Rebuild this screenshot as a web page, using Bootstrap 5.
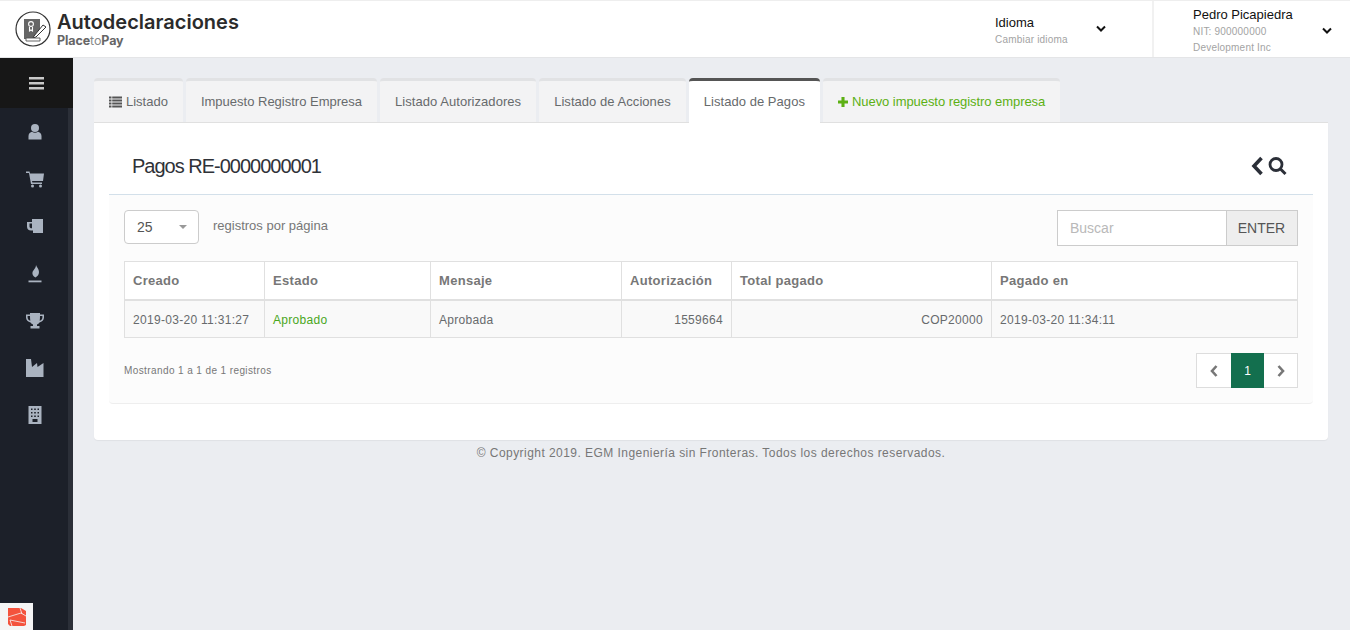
<!DOCTYPE html>
<html lang="es">
<head>
    <meta charset="utf-8">
    <title>Autodeclaraciones</title>
    <link href="https://cdn.jsdelivr.net/npm/bootstrap@5.3.0/dist/css/bootstrap.min.css" rel="stylesheet">
    <style>
        html, body { height: 100%; overflow: hidden; }
        body { background: #ebedf1; font-family: "Liberation Sans", Arial, sans-serif; font-size: 13px; color: #676a6c; }
        .top-bar { height: 58px; background: #fff; border-top: 1px solid #eee; border-bottom: 1px solid #e4e5e7; }
        .brand-wrap { padding-left: 15px; gap: 6px; }
        .brand-name { font-family: "Inter", sans-serif; font-weight: 600; font-size: 20px; line-height: 20px; color: #2b2b2b; padding-top: 1px; margin-bottom: 2px; box-sizing: content-box; }
        .brand-sub { font-family: "Inter", sans-serif; font-weight: 700; font-size: 12.500px; line-height: 14px; color: #666; letter-spacing: -.1px; }
        .brand-sub span { font-weight: 400; color: #888; }
        .top-lang { width: 157px; }
        .top-user { width: 198px; border-left: 2px solid #f1f1f1; padding-left: 39px; padding-top: 3px; }
        .top-main { font-size: 13px; line-height: 18px; color: #111; }
        .top-lang .top-main { margin-top: 4px; }
        .top-sub { font-size: 10px; line-height: 16px; color: #a3a3a3; letter-spacing: .2px; }
        .top-caret { width: 10px; height: 8px; }
        .lang-caret { margin-left: 28px; }
        .user-caret { margin-left: 29px; }
        .side-bar { width: 73px; background: #1c2029; border-right: 5px solid #2b2f38; position: relative; }
        .side-toggle { width: 73px; height: 50px; background: #171717; }
        .side-item { height: 47.300px; padding-left: 2px; }
        .side-item svg { width: 18px; height: 18px; fill: #aab3c0; }
        .debug-tab { position: absolute; left: 0; bottom: 0; width: 33px; height: 27px; background: #f5f5f5; }
        .main-area { padding: 20px 22px 0 21px; min-width: 0; }
        .pay-tabs { gap: 3px; height: 45px; }
        .pay-tab { height: 45px; padding: 0 15px; background: #f3f3f4; border-top: 3px solid #e1e2e4; border-radius: 4px 4px 0 0; border-bottom: 1px solid #e0e0e0; color: #676a6c; white-space: nowrap; text-decoration: none; }
        .pay-tab svg { width: 13px; height: 13px; margin-right: 4px; }
        .pay-tab.tab-spaced { letter-spacing: .05px; }
        .pay-tab.tab-on { background: #fff; border-top-color: #555; border-bottom-color: #fff; }
        .pay-tab.tab-new { color: #5cb013; letter-spacing: -.06px; }
        .pay-tab.tab-new svg { width: 10px; height: 10px; }
        .pay-sheet { background: #fff; height: 318px; padding: 0 15px; border-radius: 0 0 4px 4px; box-shadow: 0 1px 1px rgba(0,0,0,.05); border-top: 1px solid #e0e0e0; margin-top: -1px; }
        .sheet-head { height: 72px; padding: 0 26px 0 23px; border-bottom: 1px solid #d3e0ea; }
        .sheet-title { font-size: 20px; font-weight: 400; letter-spacing: -1px; color: #2f3238; margin: 0; padding-top: 15px; }
        .sheet-tools { padding-top: 15px; }
        .sheet-tools svg { height: 20px; }
        .sheet-body { height: 209px; background: #fcfcfc; padding: 15px; border-bottom: 1px solid #eee; border-radius: 0 0 4px 4px; }
        .page-size { width: 75px; height: 34px; border: 1px solid #ccc; border-radius: 4px; background: #fff; padding: 0 11px 0 12px; font-size: 14px; color: #555; }
        .size-arrow { border-left: 4px solid transparent; border-right: 4px solid transparent; border-top: 4px solid #999; }
        .size-label { margin-left: 14px; color: #777; padding-bottom: 3px; }
        .find-box { width: 241px; height: 36px; }
        .find-box .form-control { border: 1px solid #ccc; border-radius: 0; font-size: 14px; padding: 0 12px; height: 36px; box-shadow: none; }
        .find-box .form-control::placeholder { color: #b9b9b9; }
        .find-box .input-group-text { width: 72px; justify-content: center; border: 1px solid #ccc; border-left: 0; border-radius: 0; background: #eee; font-size: 14px; color: #555; padding: 0; }
        .pay-table { margin: 15px 0 0; width: 1174px; table-layout: fixed; border-color: #e0e0e0; color: #676a6c; font-size: 12px; letter-spacing: .3px; }
        .pay-table thead th { height: 38px; font-size: 13px; font-weight: 700; line-height: 20px; color: #777; border-color: #e0e0e0; border-bottom: 2px solid #e0e0e0; background: #fff; padding: 8px; }
        .pay-table tbody td { height: 38px; padding: 9px 8px 7px; line-height: 20px; border-color: #e0e0e0; background: #f9f9f9; color: #676a6c; }
        .pay-table tbody td.cell-ok { color: #4aa71c; }
        .w-created { width: 140px; } .w-status { width: 166px; } .w-msg { width: 191px; }
        .w-auth { width: 110px; } .w-total { width: 260px; }
        .sheet-foot { margin-top: 15px; }
        .foot-info { font-size: 10px; letter-spacing: .4px; color: #777; }
        .pay-pages { margin: 0; }
        .pay-pages .page-link { height: 35px; margin: 0 !important; display: flex; align-items: center; justify-content: center; border: 1px solid #ddd; border-radius: 0 !important; padding: 0; background: #fff; color: #777; font-size: 12px; }
        .pay-pages .page-item:first-child .page-link { width: 35px; border-right: 0; }
        .pay-pages .page-item:last-child .page-link { width: 34px; border-left: 0; }
        .pay-pages .page-item { margin: 0 !important; }
        .pay-pages .page-item.active .page-link { width: 33px; background: #136f4e; border-color: #136f4e; color: #fff; }
        .pay-pages svg { width: 10px; height: 14px; }
        .copy-line { text-align: center; padding-top: 6px; font-size: 12px; letter-spacing: .45px; color: #777; line-height: 14px; }
    </style>
</head>
<body class="d-flex flex-column">
    <!-- Top bar -->
    <header class="top-bar d-flex align-items-center flex-shrink-0">
        <div class="brand-wrap d-flex align-items-center flex-grow-1">
            <svg width="36" height="36" viewBox="0 0 36 36" fill="none" stroke="#333">
                <circle cx="18" cy="18" r="17" stroke-width="1.200"/>
                <path d="M9 8h16v10l-5 6v4H9z" fill="#666" stroke="none"/>
                <circle cx="16" cy="13" r="2.400" fill="#666" stroke="#fff" stroke-width="1.100"/>
                <path d="M14.500 16v4l1.500-1 1.500 1v-4" fill="none" stroke="#fff" stroke-width="1.100"/>
                <path d="M19 25l9-11 3 2-10 10-3 1z" fill="#fff" stroke="#333" stroke-width="1"/>
                <path d="M11 27h14v3H11z" fill="#fff" stroke="#555" stroke-width=".9"/>
            </svg>
            <div>
                <div class="brand-name">Autodeclaraciones</div>
                <div class="brand-sub">Place<span>to</span>Pay</div>
            </div>
        </div>
        <div class="top-lang d-flex align-items-center">
            <div>
                <div class="top-main">Idioma</div>
                <div class="top-sub">Cambiar idioma</div>
            </div>
            <svg class="top-caret lang-caret" viewBox="0 0 10 8"><path d="M1 1.500l4 4 4-4" fill="none" stroke="#111" stroke-width="2"/></svg>
        </div>
        <div class="top-user d-flex align-items-center h-100">
            <div>
                <div class="top-main">Pedro Picapiedra</div>
                <div class="top-sub">NIT: 900000000</div>
                <div class="top-sub">Development Inc</div>
            </div>
            <svg class="top-caret user-caret" viewBox="0 0 10 8"><path d="M1 1.500l4 4 4-4" fill="none" stroke="#111" stroke-width="2"/></svg>
        </div>
    </header>

    <div class="d-flex flex-grow-1">
        <!-- Sidebar -->
        <aside class="side-bar flex-shrink-0">
            <div class="side-toggle d-flex align-items-center justify-content-center">
                <svg width="15" height="13" viewBox="0 0 15 13" fill="#c9c9c9"><path d="M0 0h15v2.600H0zM0 5h15v2.600H0zM0 10h15v2.600H0z"/></svg>
            </div>
            <div class="side-item d-flex align-items-center justify-content-center">
                <svg viewBox="0 0 18 18"><circle cx="9" cy="5" r="4"/><path d="M2.500 16.500v-3.500c0-2.500 2-4 3.500-4.200 1.800 1.300 4.200 1.300 6 0 1.500.2 3.500 1.700 3.500 4.200v3.500z"/></svg>
            </div>
            <div class="side-item d-flex align-items-center justify-content-center">
                <svg viewBox="0 0 18 18"><path d="M0 1.500h3.500l.5 2h14l-1 7.500H6l.4 1.500H16V14H5L3 3H0z"/><circle cx="6.500" cy="16" r="1.500"/><circle cx="14.500" cy="16" r="1.500"/></svg>
            </div>
            <div class="side-item d-flex align-items-center justify-content-center">
                <svg viewBox="0 0 18 18"><path fill-rule="evenodd" d="M6 2h11v14H7v-2.500H5C2.500 13.500 1 12 1 9.500V5h5zM3.500 6.500v3c0 1 .7 1.800 2.500 1.800v-4.800z"/></svg>
            </div>
            <div class="side-item d-flex align-items-center justify-content-center">
                <svg viewBox="0 0 18 18"><path d="M10 0c.8 2.500 3 3.800 3 7 0 2.800-1.800 4.500-3.500 5.500-2.300-1-3.500-3-3-5.200C7 5 10 3.500 10 0z"/><path d="M2.500 15.500h13v1.800h-13z"/></svg>
            </div>
            <div class="side-item d-flex align-items-center justify-content-center">
                <svg viewBox="0 0 18 18"><path fill-rule="evenodd" d="M4 1h10v1.500h4v3c0 2.500-2 4.500-4.500 5-.6 1-1.500 1.700-2.500 2V14h2.500v2.500h-9V14H7v-1.500c-1-.3-1.900-1-2.500-2C2 10 0 8 0 5.500v-3h4zM1.600 4v1.500c0 1.500 1 2.700 2.700 3.200C4.100 7.500 4 5.800 4 4zM14 4c0 1.800-.1 3.500-.3 4.700 1.700-.5 2.700-1.700 2.700-3.200V4z"/></svg>
            </div>
            <div class="side-item d-flex align-items-center justify-content-center">
                <svg viewBox="0 0 18 18"><path d="M0 0h5l1 8 5-4 .5 4 6-4v14H0z"/></svg>
            </div>
            <div class="side-item d-flex align-items-center justify-content-center">
                <svg viewBox="0 0 18 18"><path fill-rule="evenodd" d="M2.500 0h13v18h-13zM5 2.500v1.500h1.500V2.500zM8.200 2.500v1.500h1.600V2.500zM11.500 2.500v1.500H13V2.500zM5 6v1.500h1.500V6zM8.200 6v1.500h1.600V6zM11.500 6v1.500H13V6zM5 9.500V11h1.500V9.500zM8.200 9.500V11h1.600V9.500zM11.500 9.500V11H13V9.500zM6.500 13v3h5v-3z"/></svg>
            </div>
            <div class="debug-tab d-flex align-items-center justify-content-center">
                <svg width="20" height="20" viewBox="0 0 20 20"><path d="M1 1h13l5 3v14l-2 1H3l-2-2z" fill="#f4533d"/><path d="M1 10l13-4 5 3M5 19l-2-6 15 3M13 1l2 6" fill="none" stroke="#f5f5f5" stroke-width=".8"/></svg>
            </div>
        </aside>

        <!-- Main content -->
        <main class="main-area flex-grow-1">
            <nav class="pay-tabs d-flex">
                <a class="pay-tab d-flex align-items-center" href="#">
                    <svg viewBox="0 0 13 13" fill="#555"><path d="M0 1.500h2.500v2H0zM3.200 1.500H13v2H3.200zM0 4.500h2.500v2H0zM3.200 4.500H13v2H3.200zM0 7.500h2.500v2H0zM3.200 7.500H13v2H3.200zM0 10.500h2.500v2H0zM3.200 10.500H13v2H3.200z"/></svg>Listado
                </a>
                <a class="pay-tab d-flex align-items-center" href="#">Impuesto Registro Empresa</a>
                <a class="pay-tab tab-spaced d-flex align-items-center" href="#">Listado Autorizadores</a>
                <a class="pay-tab tab-spaced d-flex align-items-center" href="#">Listado de Acciones</a>
                <a class="pay-tab tab-spaced tab-on d-flex align-items-center" href="#">Listado de Pagos</a>
                <a class="pay-tab tab-new d-flex align-items-center" href="#">
                    <svg viewBox="0 0 13 13" fill="#5cb013"><path d="M4.500 0h4v4.500H13v4H8.500V13h-4V8.500H0v-4h4.500z"/></svg>Nuevo impuesto registro empresa
                </a>
            </nav>

            <section class="pay-sheet">
                <div class="sheet-head d-flex align-items-center justify-content-between">
                    <h2 class="sheet-title">Pagos RE-0000000001</h2>
                    <div class="sheet-tools d-flex align-items-center gap-1">
                        <svg width="13" viewBox="0 0 13 20"><path d="M10.500 2L3 10l7.500 8" fill="none" stroke="#2b2f38" stroke-width="3.600"/></svg>
                        <svg width="19" viewBox="0 0 19 20"><circle cx="8" cy="8.500" r="6" fill="none" stroke="#2b2f38" stroke-width="2.800"/><path d="M12.500 13l5 5" stroke="#2b2f38" stroke-width="3"/></svg>
                    </div>
                </div>
                <div class="sheet-body">
                    <div class="d-flex justify-content-between align-items-start">
                        <div class="d-flex align-items-center">
                            <div class="page-size d-flex align-items-center justify-content-between">
                                <span>25</span><span class="size-arrow"></span>
                            </div>
                            <span class="size-label">registros por página</span>
                        </div>
                        <div class="find-box input-group">
                            <input type="text" class="form-control" placeholder="Buscar">
                            <span class="input-group-text">ENTER</span>
                        </div>
                    </div>

                    <table class="table table-bordered pay-table">
                        <thead>
                            <tr>
                                <th class="w-created">Creado</th>
                                <th class="w-status">Estado</th>
                                <th class="w-msg">Mensaje</th>
                                <th class="w-auth">Autorización</th>
                                <th class="w-total">Total pagado</th>
                                <th>Pagado en</th>
                            </tr>
                        </thead>
                        <tbody>
                            <tr>
                                <td>2019-03-20 11:31:27</td>
                                <td class="cell-ok">Aprobado</td>
                                <td>Aprobada</td>
                                <td class="text-end">1559664</td>
                                <td class="text-end">COP20000</td>
                                <td>2019-03-20 11:34:11</td>
                            </tr>
                        </tbody>
                    </table>

                    <div class="sheet-foot d-flex justify-content-between align-items-center">
                        <div class="foot-info">Mostrando 1 a 1 de 1 registros</div>
                        <ul class="pagination pay-pages">
                            <li class="page-item"><a class="page-link" href="#"><svg viewBox="0 0 10 14"><path d="M7.500 2L3 7l4.500 5" fill="none" stroke="#777" stroke-width="2.600"/></svg></a></li>
                            <li class="page-item active"><a class="page-link" href="#">1</a></li>
                            <li class="page-item"><a class="page-link" href="#"><svg viewBox="0 0 10 14"><path d="M2.500 2L7 7l-4.500 5" fill="none" stroke="#777" stroke-width="2.600"/></svg></a></li>
                        </ul>
                    </div>
                </div>
            </section>
            <div class="copy-line">© Copyright 2019. EGM Ingeniería sin Fronteras. Todos los derechos reservados.</div>
        </main>
    </div>
</body>
</html>
